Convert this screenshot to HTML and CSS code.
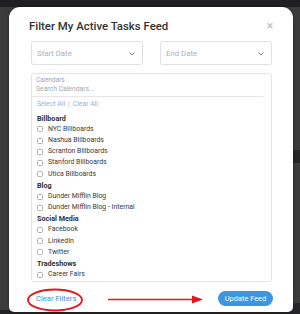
FILE: index.html
```html
<!DOCTYPE html>
<html>
<head>
<meta charset="utf-8">
<link rel="stylesheet" href="styles.css">
</head>
<body>
<div class="topbar"></div>
<div class="stage">
  <div class="modal">
    <div class="header">
      <h1>Filter My Active Tasks Feed</h1>
      <span class="close">×</span>
    </div>
    <div class="dates">
      <div class="select"><span>Start Date</span><svg width="6" height="4" viewBox="0 0 6 4"><path d="M0.5 0.5 L3 3 L5.5 0.5" fill="none" stroke="#777" stroke-width="0.9"/></svg></div>
      <div class="select"><span>End Date</span><svg width="6" height="4" viewBox="0 0 6 4"><path d="M0.5 0.5 L3 3 L5.5 0.5" fill="none" stroke="#777" stroke-width="0.9"/></svg></div>
    </div>
    <div class="calendars">
      <div class="search">
        <div class="label">Calendars</div>
        <div class="placeholder">Search Calendars...</div>
      </div>
      <div class="list">
        <div class="actions"><span>Select All</span><span class="sep">|</span><span>Clear All</span></div>
        <div class="group">Billboard</div>
        <div class="item"><span class="box"></span>NYC Billboards</div>
        <div class="item"><span class="box"></span>Nashua Billboards</div>
        <div class="item"><span class="box"></span>Scranton Billboards</div>
        <div class="item"><span class="box"></span>Stanford Billboards</div>
        <div class="item"><span class="box"></span>Utica Billboards</div>
        <div class="group">Blog</div>
        <div class="item"><span class="box"></span>Dunder Mifflin Blog</div>
        <div class="item"><span class="box"></span>Dunder Mifflin Blog - Internal</div>
        <div class="group">Social Media</div>
        <div class="item"><span class="box"></span>Facebook</div>
        <div class="item"><span class="box"></span>LinkedIn</div>
        <div class="item"><span class="box"></span>Twitter</div>
        <div class="group">Tradeshows</div>
        <div class="item"><span class="box"></span>Career Fairs</div>
      </div>
    </div>
    <div class="footer">
      <span class="clear">Clear Filters</span>
      <button class="update">Update Feed</button>
      <svg class="annot" width="284" height="31" viewBox="0 0 284 31">
        <ellipse cx="46" cy="19" rx="27" ry="10.5" fill="none" stroke="#e8141b" stroke-width="1.8"/>
        <line x1="99" y1="18.5" x2="186" y2="18.5" stroke="#e8141b" stroke-width="1.6"/>
        <path d="M183 14.5 L194 18.5 L183 22.5 Z" fill="#e8141b"/>
      </svg>
    </div>
  </div>
  <div class="side"></div>
</div>
</body>
</html>
```

FILE: styles.css
```css
* { box-sizing: border-box; }
html, body { margin: 0; padding: 0; }
body {
  width: 300px;
  height: 314px;
  overflow: hidden;
  background: #3b3b3c;
  font-family: Roboto, "Liberation Sans", sans-serif;
}
.topbar {
  height: 7px;
  background: #202022;
}
.stage {
  display: flex;
  padding-left: 9px;
  height: 307px;
  background: linear-gradient(#3b3b3c 0 303px, #232325 303px);
}
.modal {
  position: relative;
  width: 284px;
  height: 305px;
  background: #fff;
  border-radius: 11px 11px 5px 5px;
  padding: 12px 21px 0 22px;
  display: flex;
  flex-direction: column;
  box-shadow: 0 0 3px rgba(0,0,0,0.4);
}
.side {
  flex: 1;
  background: linear-gradient(#3b3b3c 0 143px, #262628 143px 156px, #3b3b3c 156px 296px, #262628 296px);
}
.header {
  display: flex;
  justify-content: space-between;
  align-items: center;
  height: 14px;
  margin-left: -2px;
}
.header h1 {
  margin: 0;
  font-size: 11.4px;
  font-weight: 500;
  color: #333;
  line-height: 14px;
}
.close {
  color: #c4c4c4;
  font-size: 12px;
  font-weight: bold;
  line-height: 14px;
  margin-right: -1px;
}
.dates {
  display: flex;
  gap: 17px;
  margin-top: 8px;
}
.select {
  flex: 1;
  height: 24px;
  border: 1px solid #e1e1e3;
  border-radius: 3px;
  display: flex;
  align-items: center;
  justify-content: space-between;
  padding: 0 7px 0 5px;
  font-size: 7.8px;
  color: #a7b0c4;
}
.select svg { margin-top: 1px; }
.calendars {
  margin-top: 8px;
  border: 1px solid #e4e4e6;
  border-radius: 3px;
  height: 209px;
  display: flex;
  flex-direction: column;
}
.search {
  height: 23px;
  border-bottom: 1px solid #e6e6ea;
  margin-right: 8px;
  padding: 2px 0 0 4px;
}
.search .label {
  font-size: 6.4px;
  color: #95a5c9;
  line-height: 8px;
}
.search .placeholder {
  font-size: 6.8px;
  color: #a3a8b2;
  line-height: 9px;
  margin-top: 1px;
}
.list {
  padding: 2px 0 0 5px;
}
.actions {
  font-size: 6.8px;
  color: #8fb3e6;
  line-height: 11px;
  margin-bottom: 2.6px;
  display: flex;
  gap: 3px;
}
.actions .sep { color: #a9b9d4; }
.group {
  font-size: 7.2px;
  font-weight: bold;
  color: #2f2f2f;
  line-height: 11.2px;
  height: 11.2px;
}
.item {
  display: flex;
  align-items: center;
  font-size: 6.9px;
  color: #3a3a3a;
  line-height: 11.2px;
  height: 11.2px;
}
.box {
  width: 6px;
  height: 6px;
  border: 1px solid #b3b3b3;
  border-radius: 1.5px;
  margin-right: 5px;
  flex: none;
}
.footer {
  flex: 1;
  display: flex;
  align-items: center;
  justify-content: space-between;
  padding-top: 1px;
  margin-right: -1px;
}
.clear {
  font-size: 7.6px;
  color: #3d8fdf;
  margin-left: 5px;
  margin-top: 1px;
}
.update {
  border: none;
  background: #3d94e0;
  color: #fff;
  font-family: inherit;
  font-size: 7.4px;
  height: 15px;
  width: 55px;
  border-radius: 8px;
  padding: 0;
  margin-top: 2px;
}
.annot {
  position: absolute;
  left: 0;
  bottom: 0;
  pointer-events: none;
}
```
